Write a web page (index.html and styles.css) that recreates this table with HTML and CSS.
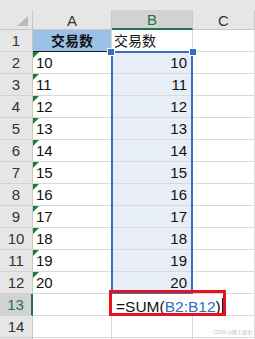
FILE: index.html
```html
<!DOCTYPE html>
<html>
<head>
<meta charset="utf-8">
<link rel="stylesheet" href="styles.css">
</head>
<body>
<div class="sheet">
  <div class="topbar"></div>
  <div class="grid">
    <div class="hd corner"><span class="tri"></span></div>
    <div class="hd col">A</div>
    <div class="hd col active">B</div>
    <div class="hd col">C</div>

    <div class="hd row">1</div><div class="c a1">交易数</div><div class="c b1">交易数</div><div class="c"></div>
    <div class="hd row">2</div><div class="c t">10</div><div class="c s">10</div><div class="c"></div>
    <div class="hd row">3</div><div class="c t">11</div><div class="c s">11</div><div class="c"></div>
    <div class="hd row">4</div><div class="c t">12</div><div class="c s">12</div><div class="c"></div>
    <div class="hd row">5</div><div class="c t">13</div><div class="c s">13</div><div class="c"></div>
    <div class="hd row">6</div><div class="c t">14</div><div class="c s">14</div><div class="c"></div>
    <div class="hd row">7</div><div class="c t">15</div><div class="c s">15</div><div class="c"></div>
    <div class="hd row">8</div><div class="c t">16</div><div class="c s">16</div><div class="c"></div>
    <div class="hd row">9</div><div class="c t">17</div><div class="c s">17</div><div class="c"></div>
    <div class="hd row">10</div><div class="c t">18</div><div class="c s">18</div><div class="c"></div>
    <div class="hd row">11</div><div class="c t">19</div><div class="c s">19</div><div class="c"></div>
    <div class="hd row">12</div><div class="c t">20</div><div class="c s">20</div><div class="c"></div>
    <div class="hd row active">13</div><div class="c"></div><div class="c edit">=SUM(<span class="ref">B2:B12</span>)<span class="caret"></span></div><div class="c"></div>
    <div class="hd row">14</div><div class="c"></div><div class="c"></div><div class="c"></div>
    <div class="hd row"></div><div class="c"></div><div class="c"></div><div class="c"></div>
  </div>
  <div class="selection"><span class="handle left"></span><span class="handle right"></span></div>
  <div class="redbox"></div>
  <div class="watermark">CSDN @稀土掘金</div>
</div>
</body>
</html>
```

FILE: styles.css
```css
* { box-sizing: border-box; }
html, body { margin: 0; padding: 0; background: #fff; }
body { width: 255px; height: 339px; overflow: hidden; }

.sheet {
  position: relative;
  width: 255px;
  height: 339px;
  overflow: hidden;
  font-family: "Liberation Sans", Arial, "Noto Sans CJK SC", sans-serif;
  font-size: 15px;
  color: #111;
}

.topbar {
  height: 10px;
  background: #e7e7e7;
}

.grid {
  display: grid;
  grid-template-columns: 33px 79px 81px 62px;
  grid-template-rows: 20px repeat(15, 22px);
}

.hd {
  background: #e6e6e6;
  border-right: 1px solid #c8c8c8;
  border-bottom: 1px solid #c8c8c8;
  color: #333;
  display: flex;
  align-items: center;
  justify-content: center;
  font-size: 15px;
}
.hd.col { padding-top: 1px; }
.hd.row { border-bottom-color: #d2d2d2; }
.hd.corner { position: relative; }
.hd.corner .tri {
  position: absolute;
  right: 4px;
  bottom: 3px;
  width: 0;
  height: 0;
  border-left: 11px solid transparent;
  border-bottom: 10px solid #b9b9b9;
}
.hd.col.active {
  background: #d2d2d2;
  color: #217346;
  border-bottom: 2px solid #217346;
}
.hd.row.active {
  background: #d2d2d2;
  color: #217346;
  border-right: 2px solid #217346;
}

.c {
  position: relative;
  border-right: 1px solid #d9d9d9;
  border-bottom: 1px solid #d9d9d9;
  line-height: 21px;
  padding: 0 3px;
  white-space: nowrap;
}
.c.a1 {
  background: #9bc2e6;
  font-family: "Noto Sans CJK SC", sans-serif;
  font-weight: bold;
  font-size: 14px;
  text-align: center;
  border-bottom: 1px solid #1a1a1a;
}
.c.b1 {
  font-family: "Noto Sans CJK SC", sans-serif;
  font-size: 14px;
  padding-left: 2px;
}
.c.t::before {
  content: "";
  position: absolute;
  left: 0;
  top: 0;
  width: 0;
  height: 0;
  border-top: 6px solid #1e7b3a;
  border-right: 6px solid transparent;
}
.c.s {
  background: #e7eef8;
  text-align: right;
  padding-right: 5px;
}
.c.edit {
  border-right: none;
  padding-left: 4px;
  padding-top: 2px;
  font-size: 15.5px;
  overflow: visible;
  z-index: 2;
}
.c.edit .ref { color: #2f6cc5; }
.c.edit .caret {
  display: inline-block;
  width: 1px;
  height: 17px;
  background: #111;
  margin-left: 1px;
  vertical-align: -3px;
}

.selection {
  position: absolute;
  left: 111px;
  top: 51px;
  width: 82px;
  height: 243px;
  border: 2px solid #3a6cc4;
  pointer-events: none;
}
.handle {
  position: absolute;
  top: -4px;
  width: 6px;
  height: 6px;
  background: #3a6cc4;
  outline: 1px solid #fff;
}
.handle.left { left: -5px; }
.handle.right { right: -5px; }

.redbox {
  position: absolute;
  left: 109px;
  top: 290px;
  width: 117px;
  height: 26px;
  border: 3px solid #e3141f;
  z-index: 3;
}

.watermark {
  position: absolute;
  right: 3px;
  bottom: 4px;
  font-family: "Noto Sans CJK SC", sans-serif;
  font-size: 5px;
  color: #c4c4c4;
  white-space: nowrap;
}
```
